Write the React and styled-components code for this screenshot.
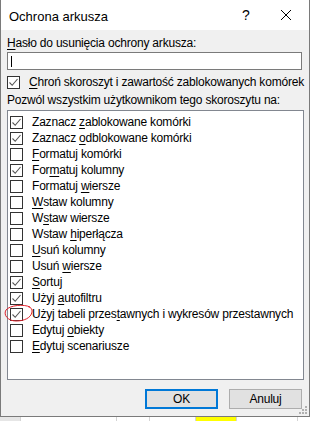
import React from "react";
import styled, { createGlobalStyle } from "styled-components";

const Global = createGlobalStyle`
  html, body { margin: 0; padding: 0; background: #fff; }
  body {
    font-family: "Liberation Sans", Arial, sans-serif;
    font-size: 12px;
    letter-spacing: -0.2px;
    color: #000;
  }
`;

const Screen = styled.div`
  width: 310px;
  height: 421px;
  display: flex;
  flex-direction: column;
  overflow: hidden;
`;

const Dialog = styled.div`
  height: 417px;
  box-sizing: border-box;
  border-left: 1px solid #7a7a7a;
  border-right: 1px solid #7a7a7a;
  border-bottom: 1px solid #7a7a7a;
  background: #f0f0f0;
  display: flex;
  flex-direction: column;
  position: relative;
`;

const TitleBar = styled.div`
  height: 30px;
  background: #fff;
  display: flex;
  align-items: center;
  padding-left: 8px;
  font-size: 13px;
  letter-spacing: 0;
  flex-shrink: 0;
`;

const Title = styled.div`
  flex: 1;
  padding-top: 2px;
`;

const TitleButton = styled.div`
  width: ${(p) => p.w}px;
  height: 30px;
  display: flex;
  align-items: center;
  justify-content: center;
  font-size: 14px;
`;

const Body = styled.div`
  flex: 1;
  display: flex;
  flex-direction: column;
  padding: 5px 5px 0 6px;
`;

const Label = styled.div`
  line-height: 16px;
  white-space: nowrap;
  margin-top: ${(p) => p.mt || 0}px;
`;

const Input = styled.div`
  margin-top: 1px;
  height: 18px;
  box-sizing: border-box;
  border: 1px solid #7a7a7a;
  background: #fff;
  margin-right: 2px;
  display: flex;
  align-items: center;
  padding-left: 3px;
`;

const Caret = styled.div`
  width: 1px;
  height: 11px;
  background: #000;
`;

const CheckRow = styled.div`
  display: flex;
  align-items: center;
  height: 16px;
  white-space: nowrap;
  margin-top: ${(p) => p.mt || 0}px;
`;

const Box = styled.div`
  width: 13px;
  height: 13px;
  box-sizing: border-box;
  border: 1px solid #333;
  background: #fff;
  margin-right: 9px;
  flex-shrink: 0;
  display: flex;
  align-items: center;
  justify-content: center;
`;

const List = styled.div`
  margin-top: 2px;
  height: 270px;
  box-sizing: border-box;
  border: 1px solid #828790;
  background: #fff;
  padding: 3px 0 0 2px;
  display: flex;
  flex-direction: column;
`;

const Buttons = styled.div`
  display: flex;
  justify-content: flex-end;
  gap: 11px;
  margin-top: 9px;
  padding-right: 2px;
`;

const Button = styled.div`
  width: 73px;
  height: 20px;
  box-sizing: border-box;
  background: #e1e1e1;
  border: ${(p) => (p.primary ? "2px solid #0078d7" : "1px solid #adadad")};
  display: flex;
  align-items: center;
  justify-content: center;
`;

const U = styled.span`
  text-decoration: underline;
  text-underline-offset: 2px;
`;

const Grip = styled.svg`
  position: absolute;
  right: 1px;
  bottom: 1px;
`;

const Annotation = styled.svg`
  position: absolute;
  left: 3px;
  top: 304px;
  pointer-events: none;
`;

const Sheet = styled.div`
  flex: 1;
  background: #fff;
  display: flex;
`;

const Cell = styled.div`
  width: ${(p) => p.w}px;
  border-right: 1px solid #d4d4d4;
  background: ${(p) => p.bg || "#fff"};
  flex-shrink: 0;
`;

const Check = () => (
  <svg width="11" height="11" viewBox="0 0 11 11">
    <path d="M1.5 5.5 L4.2 8.3 L9.5 2" fill="none" stroke="#555" strokeWidth="1.1" />
  </svg>
);

const Option = ({ checked, children, mt }) => (
  <CheckRow mt={mt}>
    <Box>{checked && <Check />}</Box>
    <span>{children}</span>
  </CheckRow>
);

const options = [
  [true, <>Zaznacz <U>z</U>ablokowane komórki</>],
  [true, <>Zaznacz <U>o</U>dblokowane komórki</>],
  [false, <><U>F</U>ormatuj komórki</>],
  [true, <>For<U>m</U>atuj kolumny</>],
  [false, <>Formatuj <U>w</U>iersze</>],
  [false, <><U>W</U>staw kolumny</>],
  [false, <>W<U>s</U>taw wiersze</>],
  [false, <>Wstaw <U>h</U>iperłącza</>],
  [false, <><U>U</U>suń kolumny</>],
  [false, <>Usuń <U>w</U>iersze</>],
  [true, <><U>S</U>ortuj</>],
  [true, <>Użyj <U>a</U>utofiltru</>],
  [true, <>Użyj tabeli przes<U>t</U>awnych i wykresów przestawnych</>],
  [false, <>Edytuj <U>o</U>biekty</>],
  [false, <><U>E</U>dytuj scenariusze</>],
];

export default function App() {
  return (
    <Screen>
      <Global />
      <Dialog>
        <TitleBar>
          <Title>Ochrona arkusza</Title>
          <TitleButton w={34}>?</TitleButton>
          <TitleButton w={46}>
            <svg width="12" height="12" viewBox="0 0 12 12">
              <path d="M1 1 L11 11 M11 1 L1 11" stroke="#000" strokeWidth="1" />
            </svg>
          </TitleButton>
        </TitleBar>
        <Body>
          <Label>
            <U>H</U>asło do usunięcia ochrony arkusza:
          </Label>
          <Input>
            <Caret />
          </Input>
          <CheckRow mt={4}>
            <Box>
              <Check />
            </Box>
            <span>
              <U>C</U>hroń skoroszyt i zawartość zablokowanych komórek
            </span>
          </CheckRow>
          <Label mt={2}>Pozwól wszystkim użytkownikom tego skoroszytu na:</Label>
          <List>
            {options.map(([c, t], i) => (
              <Option key={i} checked={c}>
                {t}
              </Option>
            ))}
          </List>
          <Buttons>
            <Button primary>OK</Button>
            <Button>Anuluj</Button>
          </Buttons>
        </Body>
        <Annotation width="30" height="20" viewBox="0 0 30 20">
          <path
            d="M26 3 C20 0 6 1 2 6 C-1 11 4 17 12 17 C20 17 27 14 28 8 C28.5 5 27 3.5 24 2.5"
            fill="none"
            stroke="#e0202a"
            strokeWidth="1"
          />
        </Annotation>
        <Grip width="10" height="10" viewBox="0 0 10 10">
          {[[8, 2], [8, 5], [8, 8], [5, 5], [5, 8], [2, 8]].map(([x, y], i) => (
            <rect key={i} x={x - 1} y={y - 1} width="2" height="2" fill="#b0b0b0" />
          ))}
        </Grip>
      </Dialog>
      <Sheet>
        <Cell w={20} bg="#e6e6e6" />
        <Cell w={95} />
        <Cell w={32} />
        <Cell w={45} />
        <Cell w={40} bg="#ffff00" />
        <Cell w={60} />
      </Sheet>
    </Screen>
  );
}
